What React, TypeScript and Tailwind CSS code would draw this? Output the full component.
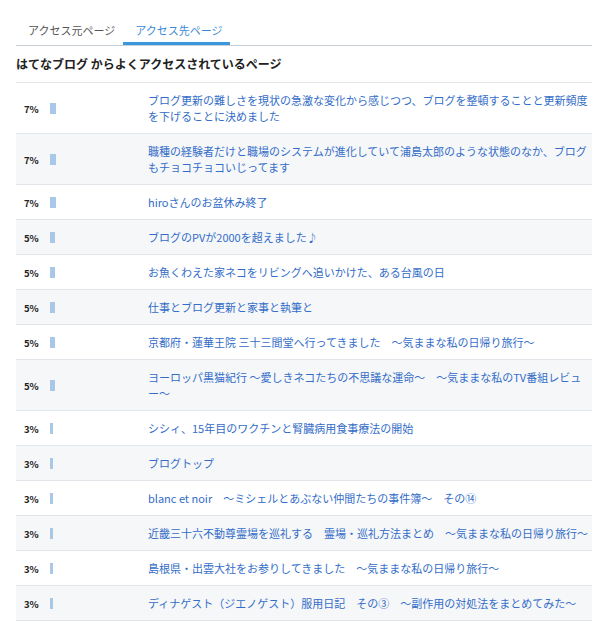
import React from 'react';

type Row = { pct: number; bar: number; title: string };

const rows: Row[] = [
  { pct: 7, bar: 6, title: 'ブログ更新の難しさを現状の急激な変化から感じつつ、ブログを整頓することと更新頻度を下げることに決めました' },
  { pct: 7, bar: 6, title: '職種の経験者だけと職場のシステムが進化していて浦島太郎のような状態のなか、ブログもチョコチョコいじってます' },
  { pct: 7, bar: 6, title: 'hiroさんのお盆休み終了' },
  { pct: 5, bar: 5, title: 'ブログのPVが2000を超えました♪' },
  { pct: 5, bar: 5, title: 'お魚くわえた家ネコをリビングへ追いかけた、ある台風の日' },
  { pct: 5, bar: 5, title: '仕事とブログ更新と家事と執筆と' },
  { pct: 5, bar: 5, title: '京都府・蓮華王院 三十三間堂へ行ってきました　～気ままな私の日帰り旅行～' },
  { pct: 5, bar: 5, title: 'ヨーロッパ黒猫紀行 ～愛しきネコたちの不思議な運命～　～気ままな私のTV番組レビュー～' },
  { pct: 3, bar: 3, title: 'シシィ、15年目のワクチンと腎臓病用食事療法の開始' },
  { pct: 3, bar: 3, title: 'ブログトップ' },
  { pct: 3, bar: 3, title: 'blanc et noir　～ミシェルとあぶない仲間たちの事件簿～　その⑭' },
  { pct: 3, bar: 3, title: '近畿三十六不動尊霊場を巡礼する　霊場・巡礼方法まとめ　～気ままな私の日帰り旅行～' },
  { pct: 3, bar: 3, title: '島根県・出雲大社をお参りしてきました　～気ままな私の日帰り旅行～' },
  { pct: 3, bar: 3, title: 'ディナゲスト（ジエノゲスト）服用日記　その③　～副作用の対処法をまとめてみた～' },
];

export default function App() {
  return (
    <div className="w-[600px] min-h-[628px] bg-white pl-4 pr-2 font-['Noto_Sans_CJK_JP','Noto_Sans',sans-serif]">
      {/* Tabs */}
      <div className="flex border-b border-[#c8ced5]">
        <button className="pl-3 pr-2 pt-[22px] pb-[4px] text-[11px] leading-4 text-[#555] border-b-[3px] border-transparent">
          アクセス元ページ
        </button>
        <button className="pl-3 pr-2 pt-[22px] pb-[4px] text-[11px] leading-4 text-[#3a8ad6] border-b-[3px] border-[#3a96dd]">
          アクセス先ページ
        </button>
      </div>

      <h2 className="mt-[10px] mb-[10px] text-[12px] leading-4 font-bold text-[#222]">
        はてなブログ からよくアクセスされているページ
      </h2>

      {/* Table */}
      <div className="border-b border-[#e1e5ea]">
        {rows.map((row, i) => (
          <div
            key={i}
            className={`flex border-t border-[#e1e5ea] ${i % 2 === 1 ? 'bg-[#f6f7f9]' : 'bg-white'}`}
          >
            <div className="flex items-center pl-2 w-[132px] shrink-0">
              <span className="w-[26px] text-[9.5px] font-bold text-[#222] pt-[2px]">{row.pct}%</span>
              <span className="h-[11px] bg-[#a9c7e6]" style={{ width: row.bar }} />
            </div>
            <div className="flex-1 py-[9px] pr-[3px] text-[11px] leading-4 text-[#336dc8]">
              {row.title}
            </div>
          </div>
        ))}
      </div>
    </div>
  );
}
